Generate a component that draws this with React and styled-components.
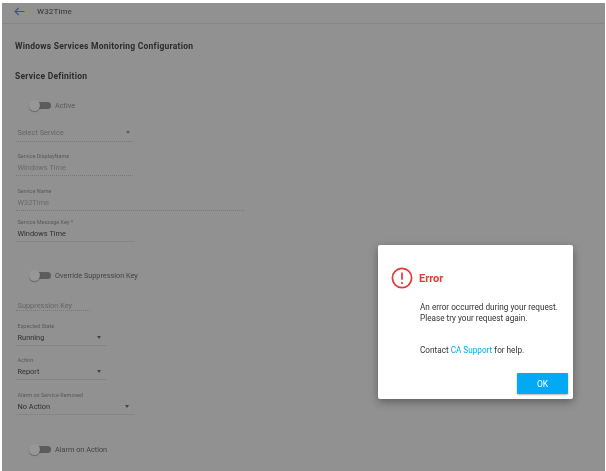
import React from 'react'
import styled, { createGlobalStyle } from 'styled-components'

const GlobalStyle = createGlobalStyle`
  html, body {
    margin: 0;
    padding: 0;
    background: #ffffff;
    overflow: hidden;
  }
  body {
    font-family: Roboto, "Liberation Sans", sans-serif;
  }
`

export default function App() {
  return (
    <>
      <GlobalStyle />
      <Screen>
        <Page>
          <Header>
            <BackIcon viewBox="0 0 11 9">
              <path d="M10.5 4.5H1M4.8 .8L1 4.5l3.8 3.7" />
            </BackIcon>
            <HeaderTitle>W32Time</HeaderTitle>
          </Header>
          <Content>
            <PageTitle>Windows Services Monitoring Configuration</PageTitle>
            <SectionTitle>Service Definition</SectionTitle>

            <ToggleRow $top={18}>
              <Toggle><Knob /></Toggle>
              <ToggleLabel $faded>Active</ToggleLabel>
            </ToggleRow>

            <SelectField $top={17} $width={117} $disabled>
              <Placeholder>Select Service</Placeholder>
              <Caret $faded />
            </SelectField>

            <Field $top={10} $width={117} $disabled>
              <FieldLabel>Service DisplayName</FieldLabel>
              <FieldValue $faded>Windows Time</FieldValue>
            </Field>

            <Field $top={11} $width={228} $disabled>
              <FieldLabel>Service Name</FieldLabel>
              <FieldValue $faded>W32Time</FieldValue>
            </Field>

            <Field $top={7} $width={119}>
              <FieldLabel>Service Message Key *</FieldLabel>
              <FieldValue>Windows Time</FieldValue>
            </Field>

            <ToggleRow $top={28}>
              <Toggle><Knob /></Toggle>
              <ToggleLabel>Override Suppression Key</ToggleLabel>
            </ToggleRow>

            <SuppressionField $top={21} $width={74} $disabled>
              <Placeholder>Suppression Key</Placeholder>
            </SuppressionField>

            <Field $top={11} $width={91}>
              <FieldLabel>Expected State</FieldLabel>
              <SelectValue>Running<Caret /></SelectValue>
            </Field>

            <Field $top={10} $width={91}>
              <FieldLabel>Action</FieldLabel>
              <SelectValue>Report<Caret /></SelectValue>
            </Field>

            <Field $top={11} $width={119}>
              <FieldLabel>Alarm on Service Removed</FieldLabel>
              <SelectValue>No Action<Caret /></SelectValue>
            </Field>

            <ToggleRow $top={29}>
              <Toggle><Knob /></Toggle>
              <ToggleLabel>Alarm on Action</ToggleLabel>
            </ToggleRow>
          </Content>
        </Page>

        <Dialog>
          <DialogHead>
            <ErrorIcon viewBox="0 0 22 22">
              <circle cx="11" cy="11" r="9.6" />
              <path d="M11 5.5v7.2M11 15v2" />
            </ErrorIcon>
            <DialogTitle>Error</DialogTitle>
          </DialogHead>
          <DialogBody>
            <p>An error occurred during your request.<br />Please try your request again.</p>
            <Contact>Contact <SupportLink>CA Support</SupportLink> for help.</Contact>
          </DialogBody>
          <DialogActions>
            <OkButton>OK</OkButton>
          </DialogActions>
        </Dialog>
      </Screen>
    </>
  )
}

const Screen = styled.div`
  position: relative;
  width: 606px;
  height: 471px;
  padding: 3px 1px 0 2px;
  box-sizing: border-box;
  overflow: hidden;
  background: #ffffff;
`

const Page = styled.div`
  height: 100%;
  background: #919191;
  filter: blur(0.45px);
`

const Header = styled.header`
  height: 16px;
  padding: 0 0 4px 12px;
  display: flex;
  align-items: center;
  gap: 12px;
  border-bottom: 1px solid #868686;
`

const BackIcon = styled.svg`
  width: 11px;
  height: 9px;
  fill: none;
  stroke: #34558f;
  stroke-width: 1.1;
`

const HeaderTitle = styled.span`
  font-size: 8px;
  font-weight: 500;
  letter-spacing: 0.1px;
  color: #454545;
`

const Content = styled.main`
  display: flex;
  flex-direction: column;
  align-items: flex-start;
  padding: 16px 0 0 13px;
`

const PageTitle = styled.h1`
  margin: 0;
  font-size: 8.5px;
  line-height: 12px;
  font-weight: 700;
  letter-spacing: 0.25px;
  color: #2b2b2b;
`

const SectionTitle = styled.h2`
  margin: 18px 0 0;
  font-size: 8.5px;
  line-height: 12px;
  font-weight: 700;
  letter-spacing: 0.25px;
  color: #2b2b2b;
`

const ToggleRow = styled.div`
  display: flex;
  align-items: center;
  margin-top: ${p => p.$top}px;
  margin-left: 15px;
  height: 10px;
`

const Toggle = styled.span`
  position: relative;
  display: block;
  width: 21px;
  height: 7px;
  border-radius: 4px;
  background: #5c5c5c;
`

const Knob = styled.span`
  position: absolute;
  left: -1px;
  top: -2px;
  width: 11px;
  height: 11px;
  border-radius: 50%;
  background: #979797;
  box-shadow: 0 1px 1px rgba(0, 0, 0, 0.3);
`

const ToggleLabel = styled.span`
  margin-left: 4px;
  font-size: 7.3px;
  color: ${p => (p.$faded ? '#5a5a5a' : '#444444')};
`

const Field = styled.div`
  display: flex;
  flex-direction: column;
  box-sizing: border-box;
  width: ${p => p.$width}px;
  margin: ${p => p.$top}px 0 0 1px;
  padding: 0 1px 2px 1.5px;
  border-bottom: 1px ${p => (p.$disabled ? 'dotted #777777' : 'solid #858585')};
`

const SelectField = styled(Field)`
  flex-direction: row;
  align-items: center;
  justify-content: space-between;
  padding-bottom: 3px;
`

const SuppressionField = styled(SelectField)`
  height: 10px;
  padding-bottom: 0;
`

const Placeholder = styled.span`
  font-size: 7.4px;
  line-height: 11px;
  color: #666666;
`

const FieldLabel = styled.label`
  font-size: 5.5px;
  line-height: 8px;
  color: #5a5a5a;
`

const FieldValue = styled.span`
  margin-top: 2px;
  font-size: 7.4px;
  line-height: 11px;
  color: ${p => (p.$faded ? '#6a6a6a' : '#2f2f2f')};
`

const SelectValue = styled(FieldValue)`
  display: flex;
  align-items: center;
  justify-content: space-between;
  padding-right: 3px;
`

const Caret = styled.i`
  width: 0;
  height: 0;
  margin-right: 2px;
  border-left: 2.5px solid transparent;
  border-right: 2.5px solid transparent;
  border-top: 3px solid ${p => (p.$faded ? '#5c5c5c' : '#444444')};
`

const Dialog = styled.section`
  position: absolute;
  left: 378px;
  top: 245px;
  width: 195px;
  height: 154px;
  box-sizing: border-box;
  border-radius: 2px;
  background: #ffffff;
  box-shadow: 0 3px 8px rgba(0, 0, 0, 0.35);
  filter: blur(0.3px);
`

const DialogHead = styled.div`
  display: flex;
  align-items: center;
  gap: 6px;
  padding: 22px 0 0 13px;
`

const ErrorIcon = styled.svg`
  width: 22px;
  height: 22px;
  fill: none;
  stroke: #e53935;
  stroke-width: 1.7;
`

const DialogTitle = styled.h3`
  margin: 0;
  font-size: 11px;
  font-weight: 700;
  color: #e53935;
`

const DialogBody = styled.div`
  margin-top: 13px;
  padding-left: 42px;
  font-size: 8.2px;
  line-height: 11px;
  color: #333333;

  p {
    margin: 0;
  }
`

const Contact = styled.p`
  && {
    margin-top: 21px;
  }
`

const SupportLink = styled.a`
  color: #03a9f4;
`

const DialogActions = styled.div`
  display: flex;
  justify-content: flex-end;
  padding: 17px 5px 0 0;
`

const OkButton = styled.button`
  width: 51px;
  height: 21px;
  padding: 0;
  border: none;
  border-radius: 1px;
  background: #03a9f4;
  color: #ffffff;
  font-family: inherit;
  font-size: 8.5px;
  box-shadow: 0 1px 2px rgba(0, 0, 0, 0.3);
`
